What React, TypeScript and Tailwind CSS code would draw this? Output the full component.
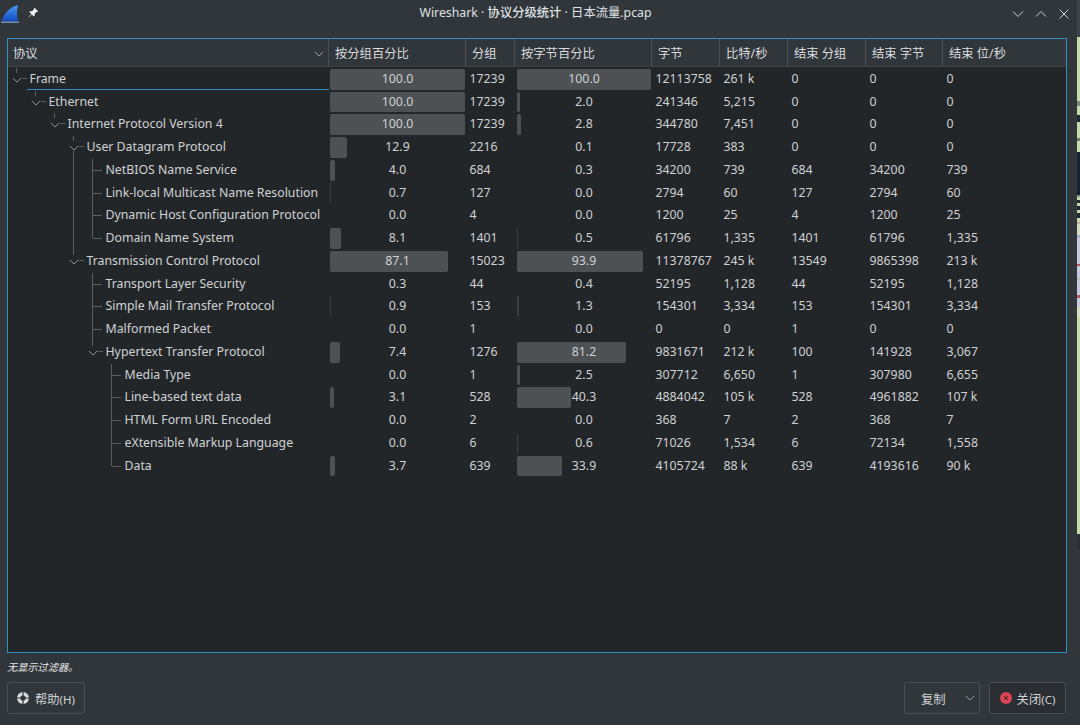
import React from 'react';

type ProtoRow = {
  name: string;
  level: number;
  open?: boolean;
  // one flag per ancestor level: does a vertical guide pass through this row
  guides: boolean[];
  last?: boolean;
  pkPct: number;
  packets: string;
  bytePct: number;
  bytes: string;
  rate: string;
  endPk: string;
  endBytes: string;
  endRate: string;
};

const rows: ProtoRow[] = [
  { name: 'Frame', level: 0, open: true, guides: [], pkPct: 100, packets: '17239', bytePct: 100, bytes: '12113758', rate: '261 k', endPk: '0', endBytes: '0', endRate: '0' },
  { name: 'Ethernet', level: 1, open: true, guides: [false], pkPct: 100, packets: '17239', bytePct: 2, bytes: '241346', rate: '5,215', endPk: '0', endBytes: '0', endRate: '0' },
  { name: 'Internet Protocol Version 4', level: 2, open: true, guides: [false, false], pkPct: 100, packets: '17239', bytePct: 2.8, bytes: '344780', rate: '7,451', endPk: '0', endBytes: '0', endRate: '0' },
  { name: 'User Datagram Protocol', level: 3, open: true, guides: [false, false, false], pkPct: 12.9, packets: '2216', bytePct: 0.1, bytes: '17728', rate: '383', endPk: '0', endBytes: '0', endRate: '0' },
  { name: 'NetBIOS Name Service', level: 4, guides: [false, false, false, true], pkPct: 4, packets: '684', bytePct: 0.3, bytes: '34200', rate: '739', endPk: '684', endBytes: '34200', endRate: '739' },
  { name: 'Link-local Multicast Name Resolution', level: 4, guides: [false, false, false, true], pkPct: 0.7, packets: '127', bytePct: 0, bytes: '2794', rate: '60', endPk: '127', endBytes: '2794', endRate: '60' },
  { name: 'Dynamic Host Configuration Protocol', level: 4, guides: [false, false, false, true], pkPct: 0, packets: '4', bytePct: 0, bytes: '1200', rate: '25', endPk: '4', endBytes: '1200', endRate: '25' },
  { name: 'Domain Name System', level: 4, last: true, guides: [false, false, false, true], pkPct: 8.1, packets: '1401', bytePct: 0.5, bytes: '61796', rate: '1,335', endPk: '1401', endBytes: '61796', endRate: '1,335' },
  { name: 'Transmission Control Protocol', level: 3, open: true, last: true, guides: [false, false, false], pkPct: 87.1, packets: '15023', bytePct: 93.9, bytes: '11378767', rate: '245 k', endPk: '13549', endBytes: '9865398', endRate: '213 k' },
  { name: 'Transport Layer Security', level: 4, guides: [false, false, false, false], pkPct: 0.3, packets: '44', bytePct: 0.4, bytes: '52195', rate: '1,128', endPk: '44', endBytes: '52195', endRate: '1,128' },
  { name: 'Simple Mail Transfer Protocol', level: 4, guides: [false, false, false, false], pkPct: 0.9, packets: '153', bytePct: 1.3, bytes: '154301', rate: '3,334', endPk: '153', endBytes: '154301', endRate: '3,334' },
  { name: 'Malformed Packet', level: 4, guides: [false, false, false, false], pkPct: 0, packets: '1', bytePct: 0, bytes: '0', rate: '0', endPk: '1', endBytes: '0', endRate: '0' },
  { name: 'Hypertext Transfer Protocol', level: 4, open: true, last: true, guides: [false, false, false, false], pkPct: 7.4, packets: '1276', bytePct: 81.2, bytes: '9831671', rate: '212 k', endPk: '100', endBytes: '141928', endRate: '3,067' },
  { name: 'Media Type', level: 5, guides: [false, false, false, false, false], pkPct: 0, packets: '1', bytePct: 2.5, bytes: '307712', rate: '6,650', endPk: '1', endBytes: '307980', endRate: '6,655' },
  { name: 'Line-based text data', level: 5, guides: [false, false, false, false, false], pkPct: 3.1, packets: '528', bytePct: 40.3, bytes: '4884042', rate: '105 k', endPk: '528', endBytes: '4961882', endRate: '107 k' },
  { name: 'HTML Form URL Encoded', level: 5, guides: [false, false, false, false, false], pkPct: 0, packets: '2', bytePct: 0, bytes: '368', rate: '7', endPk: '2', endBytes: '368', endRate: '7' },
  { name: 'eXtensible Markup Language', level: 5, guides: [false, false, false, false, false], pkPct: 0, packets: '6', bytePct: 0.6, bytes: '71026', rate: '1,534', endPk: '6', endBytes: '72134', endRate: '1,558' },
  { name: 'Data', level: 5, last: true, guides: [false, false, false, false, false], pkPct: 3.7, packets: '639', bytePct: 33.9, bytes: '4105724', rate: '88 k', endPk: '639', endBytes: '4193616', endRate: '90 k' },
];

// the background application peeking out on the right edge of the desktop
const strip = [
  ['#3d454c', 37], ['#c5dba8', 64], ['#7d8a78', 5], ['#c5dba8', 9], ['#1d2b33', 7], ['#c5dba8', 16],
  ['#6f7a6c', 3], ['#c5dba8', 11], ['#14242c', 43], ['#8a9484', 2], ['#c5dba8', 3], ['#20282c', 3],
  ['#c5dba8', 3], ['#20282c', 4], ['#c5dba8', 3], ['#20282c', 5], ['#c5dba8', 4], ['#c9a9a0', 2],
  ['#d3dcc0', 11], ['#a7adc0', 3], ['#c9c8e0', 26], ['#b2525c', 2], ['#c9c8e0', 12], ['#b8b8b8', 2],
  ['#c9c8e0', 15], ['#b9505a', 3], ['#c9c8e0', 9], ['#d8dcc0', 10], ['#c5dba8', 217], ['#2b3035', 15], ['#31363b', 168],
] as const;

const columns = 'grid-cols-[321px_137px_49px_137px_68px_68px_78px_77px_123px]';

const Chevron = ({ className }: { className: string }) => (
  <svg viewBox="0 0 12 7" className={className} fill="none" stroke="currentColor" strokeWidth="1">
    <path d="M1 1l5 5 5-5" />
  </svg>
);

const Bar = ({ pct, max }: { pct: number; max: number }) => {
  const width = (pct / 100) * max;
  if (width < 0.6) return null;
  return (
    <div
      className={`absolute inset-y-[1px] left-0 rounded-[2px] ${width < 2 ? 'bg-[#3a3e41]' : 'bg-[#4d5154]'}`}
      style={{ width: Math.max(1, Math.round(width)) }}
    />
  );
};

const BarCell = ({ pct, max, pad }: { pct: number; max: number; pad: string }) => (
  <div className={`relative ${pad}`}>
    <div className="relative h-full">
      <Bar pct={pct} max={max} />
      <div className="relative flex h-full items-center justify-center">{pct.toFixed(1)}</div>
    </div>
  </div>
);

const TreeCell = ({ row }: { row: ProtoRow }) => (
  <div className="relative flex h-full items-center">
    {row.guides.map((on, i) => (
      <div key={i} className="relative h-full w-[19px] shrink-0">
        {on && <div className="absolute inset-y-0 left-[8px] w-px bg-[#5a5e61]" />}
      </div>
    ))}
    <div className="relative h-full w-[19px] shrink-0">
      {row.open ? (
        <>
          <div className="absolute left-[8px] top-0 h-[5px] w-px bg-[#5a5e61]" />
          <Chevron className="absolute left-[4px] top-[9px] h-[6px] w-[10px] text-[#a9adb0]" />
          <div className="absolute left-[14px] top-[10px] h-px w-[5px] bg-[#5a5e61]" />
          {!row.last && row.level === 3 && <div className="absolute bottom-0 left-[8px] top-[15px] w-px bg-[#5a5e61]" />}
        </>
      ) : (
        <>
          <div className={`absolute left-[8px] top-0 w-px bg-[#5a5e61] ${row.last ? 'h-[11px]' : 'h-full'}`} />
          <div className="absolute left-[9px] top-[11px] h-px w-[9px] bg-[#5a5e61]" />
        </>
      )}
    </div>
    <span className="pl-[2.5px] whitespace-nowrap">{row.name}</span>
  </div>
);

const PlainCell = ({ children }: { children: React.ReactNode }) => (
  <div className="flex items-center pl-[3.5px]">{children}</div>
);

const headers = ['按分组百分比', '分组', '按字节百分比', '字节', '比特/秒', '结束 分组', '结束 字节', '结束 位/秒'];

export default function App() {
  return (
    <div className="flex h-[725px] w-[1080px] overflow-hidden bg-[#31363b] font-['Noto_Sans','Noto_Sans_CJK_SC',sans-serif] text-[12.3px] text-[#cfd2d4]">
      <div className="flex w-[1077px] shrink-0 flex-col">
        {/* Title bar */}
        <div className="grid h-[38px] shrink-0 grid-cols-[1fr_auto_1fr] items-center pb-[12px] pl-[1px] pr-[7px] pt-[1px]">
          <div className="flex items-center gap-[8px]">
            <svg viewBox="0 0 20 20" className="h-[21px] w-[19px]">
              <defs>
                <linearGradient id="fin" x1="0" y1="0" x2="0" y2="1">
                  <stop offset="0" stopColor="#4a9bf0" />
                  <stop offset="1" stopColor="#1149c4" />
                </linearGradient>
              </defs>
              <path d="M1 18C3 10 9 3 18 1c-1.500 5-1.500 11 0 17z" fill="url(#fin)" />
              <path d="M0 18.500h19v1.300H0z" fill="#7fa9d8" />
            </svg>
            <svg viewBox="0 0 12 12" className="mb-[2px] h-[11px] w-[11px] text-[#eff0f1]" fill="currentColor">
              <path d="M7.200.8l4 4-1 .7-.7-.3-2.300 2.300.2 1.900-1 1L4.100 8.100 1 11.200l-.4-.4L3.700 7.700 1.400 5.400l1-1 1.900.2 2.300-2.300-.3-.7z" />
            </svg>
          </div>
          <div className="text-[#dfe1e3]">
            Wireshark · <span className="font-medium">协议分级统计</span> · 日本流量.pcap
          </div>
          <div className="flex items-center justify-end gap-[11px] text-[#d3d6d8]">
            <svg viewBox="0 0 12 12" className="h-[12px] w-[12px]" fill="none" stroke="currentColor"><path d="M1 3.500l5 5 5-5" /></svg>
            <svg viewBox="0 0 12 12" className="h-[12px] w-[12px]" fill="none" stroke="currentColor"><path d="M1 8.500l5-5 5 5" /></svg>
            <svg viewBox="0 0 12 12" className="h-[12px] w-[12px]" fill="none" stroke="currentColor"><path d="M1.500 1.500l9 9M10.500 1.500l-9 9" /></svg>
          </div>
        </div>

        {/* Protocol tree */}
        <div className="ml-[7px] mr-[10px] flex h-[615px] shrink-0 flex-col border border-[#2f8fc4] bg-[#232629]">
          <div className={`grid h-[28px] shrink-0 border-b border-[#3d4247] bg-[#31363b] text-[#dadcde] ${columns}`}>
            <div className="flex items-center justify-between border-r border-[#4a4f54] pl-[5px] pr-[4px] pt-[3px]">
              <span>协议</span>
              <Chevron className="h-[6px] w-[10px] text-[#b9bcbe]" />
            </div>
            {headers.map((h) => (
              <div key={h} className="flex items-center border-r border-[#4a4f54] pl-[6px] pt-[3px] last:border-r-0">{h}</div>
            ))}
          </div>
          <div className="flex flex-col pt-[0.8px]">
            {rows.map((row, i) => (
              <div key={row.name} className={`relative grid h-[22.76px] ${columns}`}>
                <TreeCell row={row} />
                <BarCell pct={row.pkPct} max={135} pad="pl-[1px] pr-[1px]" />
                <PlainCell>{row.packets}</PlainCell>
                <BarCell pct={row.bytePct} max={134} pad="pl-[2px] pr-[1px]" />
                <PlainCell>{row.bytes}</PlainCell>
                <PlainCell>{row.rate}</PlainCell>
                <PlainCell>{row.endPk}</PlainCell>
                <PlainCell>{row.endBytes}</PlainCell>
                <PlainCell>{row.endRate}</PlainCell>
                {i === 0 && <div className="absolute bottom-[1px] left-[19px] z-10 h-[1px] w-[302px] border-t border-[#2f8fc4]" />}
              </div>
            ))}
          </div>
        </div>

        {/* Footer */}
        <div className="flex flex-1 flex-col px-[7px] pr-[11px]">
          <div className="mt-[7px] h-[14px] text-[10.2px] italic leading-[14px] text-[#e6e8e9]">无显示过滤器。</div>
          <div className="mt-[8px] flex items-center justify-between">
            <button className="flex h-[32px] w-[78px] items-center justify-center gap-[6px] rounded-[3px] border border-[#4a4f54] bg-[#31363b]">
              <svg viewBox="0 0 12 12" className="h-[12px] w-[12px]">
                <circle cx="6" cy="6" r="6" fill="#d8dadc" />
                <circle cx="6" cy="6" r="2.600" fill="#31363b" />
                <path d="M0 6h12M6 0v12" stroke="#31363b" strokeWidth="1.200" />
              </svg>
              <span className="pt-[4px]">帮助<span className="text-[11.5px]">(H)</span></span>
            </button>
            <div className="flex gap-[9px]">
              <button className="flex h-[32px] w-[76px] items-center justify-between rounded-[3px] border border-[#4a4f54] bg-[#31363b] pl-[16px] pr-[4px]">
                <span className="pt-[4px]">复制</span>
                <Chevron className="h-[6px] w-[10px] text-[#b9bcbe]" />
              </button>
              <button className="flex h-[32px] w-[77px] items-center justify-center gap-[5px] rounded-[3px] border border-[#4a4f54] bg-[#2a2e32]">
                <svg viewBox="0 0 12 12" className="h-[12px] w-[12px]">
                  <circle cx="6" cy="6" r="6" fill="#da4453" />
                  <path d="M4 4l4 4M8 4l-4 4" stroke="#3a2428" strokeWidth="1" />
                </svg>
                <span className="pt-[4px]">关闭<span className="text-[11.5px]">(C)</span></span>
              </button>
            </div>
          </div>
        </div>
      </div>

      {/* Desktop behind the window */}
      <div className="flex w-[3px] shrink-0 flex-col">
        {strip.map(([color, height], i) => (
          <div key={i} style={{ backgroundColor: color, height }} />
        ))}
      </div>
    </div>
  );
}
